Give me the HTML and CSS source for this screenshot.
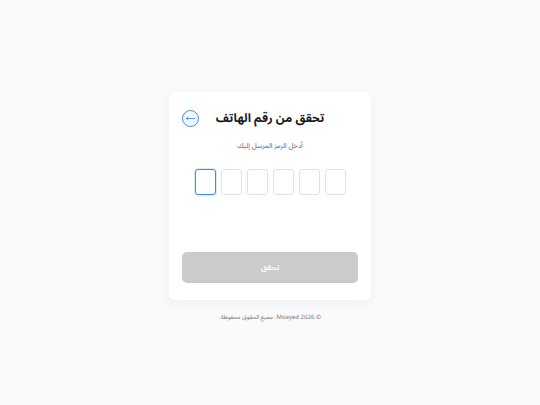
FILE: index.html
```html
<!DOCTYPE html>
<html lang="ar" dir="rtl">
<head>
<meta charset="utf-8">
<meta name="viewport" content="width=device-width, initial-scale=1">
<title>تحقق من رقم الهاتف</title>
<link rel="stylesheet" href="styles.css">
</head>
<body>
<main class="page">
  <form class="card">
    <header class="card-header">
      <h1 class="title">تحقق من رقم الهاتف</h1>
      <button class="back" type="button" aria-label="رجوع">
        <svg class="back-icon" viewBox="0 0 12 12" aria-hidden="true"><path d="M11 6H1.5M3.5 4.2L1.5 6l2 1.8"/></svg>
      </button>
    </header>
    <p class="hint">أدخل الرمز المرسل إليك</p>
    <div class="code" dir="ltr">
      <input class="digit digit-active" type="text" inputmode="numeric" maxlength="1" aria-label="الرقم 1">
      <input class="digit" type="text" inputmode="numeric" maxlength="1" aria-label="الرقم 2">
      <input class="digit" type="text" inputmode="numeric" maxlength="1" aria-label="الرقم 3">
      <input class="digit" type="text" inputmode="numeric" maxlength="1" aria-label="الرقم 4">
      <input class="digit" type="text" inputmode="numeric" maxlength="1" aria-label="الرقم 5">
      <input class="digit" type="text" inputmode="numeric" maxlength="1" aria-label="الرقم 6">
    </div>
    <button class="submit" type="submit" disabled>تحقق</button>
  </form>
  <footer class="footer">© 2026 Moayed. جميع الحقوق محفوظة.</footer>
</main>
</body>
</html>
```
FILE: styles.css
```css
* {
  box-sizing: border-box;
}

body {
  margin: 0;
  background: #f9fafc;
  color: #1a1a1a;
  font-family: "Noto Sans Arabic", "Noto Sans", sans-serif;
  text-rendering: geometricPrecision;
}

button,
input {
  font: inherit;
}

.page {
  min-height: 100vh;
  padding: 26px 16px 16px;
  display: flex;
  flex-direction: column;
  align-items: center;
  justify-content: center;
  gap: 12px;
}

.card {
  width: 100%;
  max-width: 202px;
  padding: 17px 13px;
  border-radius: 6px;
  background: #fff;
  box-shadow: 0 3px 12px rgba(0, 0, 0, 0.05);
}

.card-header {
  display: grid;
  grid-template-columns: 17px 1fr 17px;
  align-items: center;
}

.title {
  grid-column: 2;
  margin: 0;
  font-size: 12px;
  font-weight: 700;
  line-height: 20px;
  text-align: center;
  white-space: nowrap;
}

.back {
  width: 17px;
  height: 17px;
  padding: 0;
  display: grid;
  place-items: center;
  border: 1px solid #408fdd;
  border-radius: 50%;
  background: #f1f8fe;
}

.back-icon {
  width: 11px;
  height: 11px;
  fill: none;
  stroke: #4a95dd;
  stroke-width: 1;
}

.hint {
  margin: 12px 0 16px;
  color: #666;
  font-size: 7px;
  line-height: 12px;
  text-align: center;
}

.code {
  display: flex;
  justify-content: center;
  gap: 5px;
}

.digit {
  width: 21px;
  height: 26px;
  padding: 0;
  border: 1px solid #e2e2e2;
  border-radius: 3px;
  background: #fff;
  font-size: 10px;
  text-align: center;
  outline: none;
}

.digit-active {
  border-color: #3d8fdf;
  box-shadow: 0 0 0 1px #dcebf9;
}

.submit {
  width: 100%;
  height: 31px;
  margin-top: 57px;
  padding: 0;
  display: block;
  border: 0;
  border-radius: 5px;
  background: #cbcbcb;
  color: #fff;
  font-size: 8px;
  font-weight: 600;
}

.footer {
  color: #777;
  font-size: 6px;
  line-height: 12px;
  text-align: center;
}
```
